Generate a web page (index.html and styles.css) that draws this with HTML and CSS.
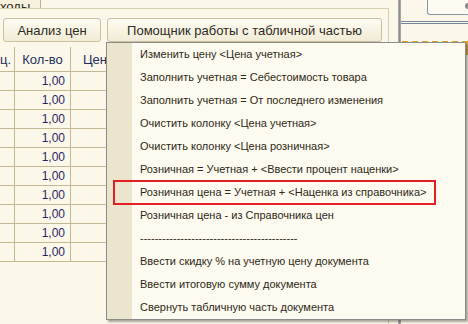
FILE: index.html
```html
<!DOCTYPE html>
<html lang="ru">
<head>
    <meta charset="UTF-8">
    <title>Помощник работы с табличной частью</title>
    <link rel="stylesheet" href="styles.css">
</head>
<body>
    <div class="window">
        <div class="main">
            <div class="tabs">
                <div class="tab">ходы</div>
            </div>
            <div class="panel">
                <div class="toolbar">
                    <button class="btn btn-prices">Анализ цен</button>
                    <button class="btn btn-helper">Помощник работы с табличной частью</button>
                </div>
                <table class="grid">
                    <thead>
                        <tr>
                            <th class="col-unit">ц.</th>
                            <th class="col-qty">Кол-во</th>
                            <th class="col-price">Цена учетная</th>
                        </tr>
                    </thead>
                    <tbody id="rows"></tbody>
                </table>
            </div>
        </div>
        <div class="splitter"></div>
        <div class="side">
            <div class="side-top">
                <div class="side-box"><span class="side-icon"></span></div>
            </div>
            <div class="side-rule"></div>
            <div class="side-focus"></div>
        </div>
    </div>

    <div class="menu">
        <div class="menu-item">Изменить цену &lt;Цена учетная&gt;</div>
        <div class="menu-item">Заполнить учетная = Себестоимость товара</div>
        <div class="menu-item">Заполнить учетная = От последнего изменения</div>
        <div class="menu-item">Очистить колонку &lt;Цена учетная&gt;</div>
        <div class="menu-item">Очистить колонку &lt;Цена розничная&gt;</div>
        <div class="menu-item">Розничная = Учетная + &lt;Ввести процент наценки&gt;</div>
        <div class="menu-item marked">Розничная цена = Учетная + &lt;Наценка из справочника&gt;</div>
        <div class="menu-item">Розничная цена - из Справочника цен</div>
        <div class="menu-item">-------------------------------------------</div>
        <div class="menu-item">Ввести скидку % на учетную цену документа</div>
        <div class="menu-item">Ввести итоговую сумму документа</div>
        <div class="menu-item">Свернуть табличную часть документа</div>
    </div>

    <script>
        // Fill the grid rows
        const rows = document.getElementById('rows');
        for (let i = 0; i < 10; i++) {
            const tr = document.createElement('tr');
            tr.innerHTML = '<td></td><td class="num">1,00</td><td class="num">250,00</td>';
            rows.appendChild(tr);
        }
    </script>
</body>
</html>
```

FILE: styles.css
```css
body {
    margin: 0;
    background-color: #fbf8e9;
    font-family: 'Liberation Sans', Arial, sans-serif;
    color: #2b2718;
    overflow: hidden;
}

.window {
    display: flex;
    height: 324px;
    width: 468px;
}

.main {
    width: 398px;
    display: flex;
    flex-direction: column;
}

.tabs {
    height: 8px;
    display: flex;
}

.tab {
    width: 40px;
    height: 8px;
    overflow: hidden;
    border-right: 1px solid #b9b193;
    background-color: #f6f1de;
    font-size: 13px;
    line-height: 13px;
    text-indent: 0;
}

.tab::first-line {
    line-height: 0;
}

.panel {
    width: 388px;
    flex: 1;
    border-top: 1px solid #d8d0b2;
    border-right: 1px solid #d8d0b2;
}

.toolbar {
    display: flex;
    gap: 6px;
    padding: 9px 0 0 3px;
}

.btn {
    height: 24px;
    padding: 0 10px;
    font-family: 'Liberation Sans', Arial, sans-serif;
    font-size: 13px;
    color: #2f2a1c;
    background: linear-gradient(#fefcf2, #f1ebd6);
    border: 1px solid #c9c0a0;
    border-radius: 3px;
}

.btn-prices {
    width: 98px;
}

.btn-helper {
    width: 275px;
}

.grid {
    margin-top: 5px;
    border-collapse: collapse;
    font-size: 13px;
}

.grid th {
    height: 24px;
    padding: 0;
    font-weight: normal;
    color: #1f2f5c;
    border-right: 1px solid #c2b893;
    border-bottom: 1px solid #c2b893;
}

.grid td {
    height: 18px;
    padding: 0 5px 0 0;
    border-right: 1px solid #c2b893;
    border-bottom: 1px solid #c2b893;
}

.col-unit {
    width: 14px;
    text-align: left;
}

.col-qty {
    width: 55px;
    text-align: center;
}

.col-price {
    width: 90px;
    text-align: left;
    padding-left: 12px !important;
    white-space: nowrap;
}

.num {
    text-align: right;
    color: #2c1f66;
    font-size: 12px;
}

.splitter {
    width: 3px;
    background: linear-gradient(to right, #b8b8b8, #8f8f8f, #b0b0b0);
}

.side {
    flex: 1;
    display: flex;
    flex-direction: column;
}

.side-top {
    height: 14px;
    display: flex;
    justify-content: flex-end;
}

.side-box {
    width: 40px;
    height: 14px;
    border: 1px solid #8996a4;
    border-top: none;
    border-right: none;
    border-bottom-left-radius: 3px;
    background-color: #fdfbf1;
    position: relative;
}

.side-icon {
    position: absolute;
    right: -3px;
    top: 3px;
    width: 6px;
    height: 6px;
    border-radius: 50%;
    background-color: #8a8a8a;
}

.side-rule {
    margin-top: 7px;
    height: 1px;
    border-top: 1px solid #76879a;
    border-bottom: 1px solid #76879a;
}

.side-focus {
    margin-top: 17px;
    margin-left: 1px;
    height: 12px;
    border-top: 2px dashed #e0a030;
    border-right: 2px solid #e0a030;
}

.menu {
    position: absolute;
    left: 106px;
    top: 42px;
    width: 358px;
    border: 1px solid #8a8a86;
    background: linear-gradient(to right, #ece5cd 0, #ece5cd 25px, #fdfbef 25px);
    box-shadow: 2px 2px 2px rgba(60, 60, 60, 0.45);
    font-size: 11px;
}

.menu-item {
    position: relative;
    height: 23px;
    line-height: 23px;
    padding-left: 33px;
    color: #2d2816;
    white-space: nowrap;
}

.menu-item.marked::after {
    content: '';
    position: absolute;
    left: 6px;
    top: -1px;
    width: 319px;
    height: 21px;
    border: 2px solid #e31e24;
}
```
